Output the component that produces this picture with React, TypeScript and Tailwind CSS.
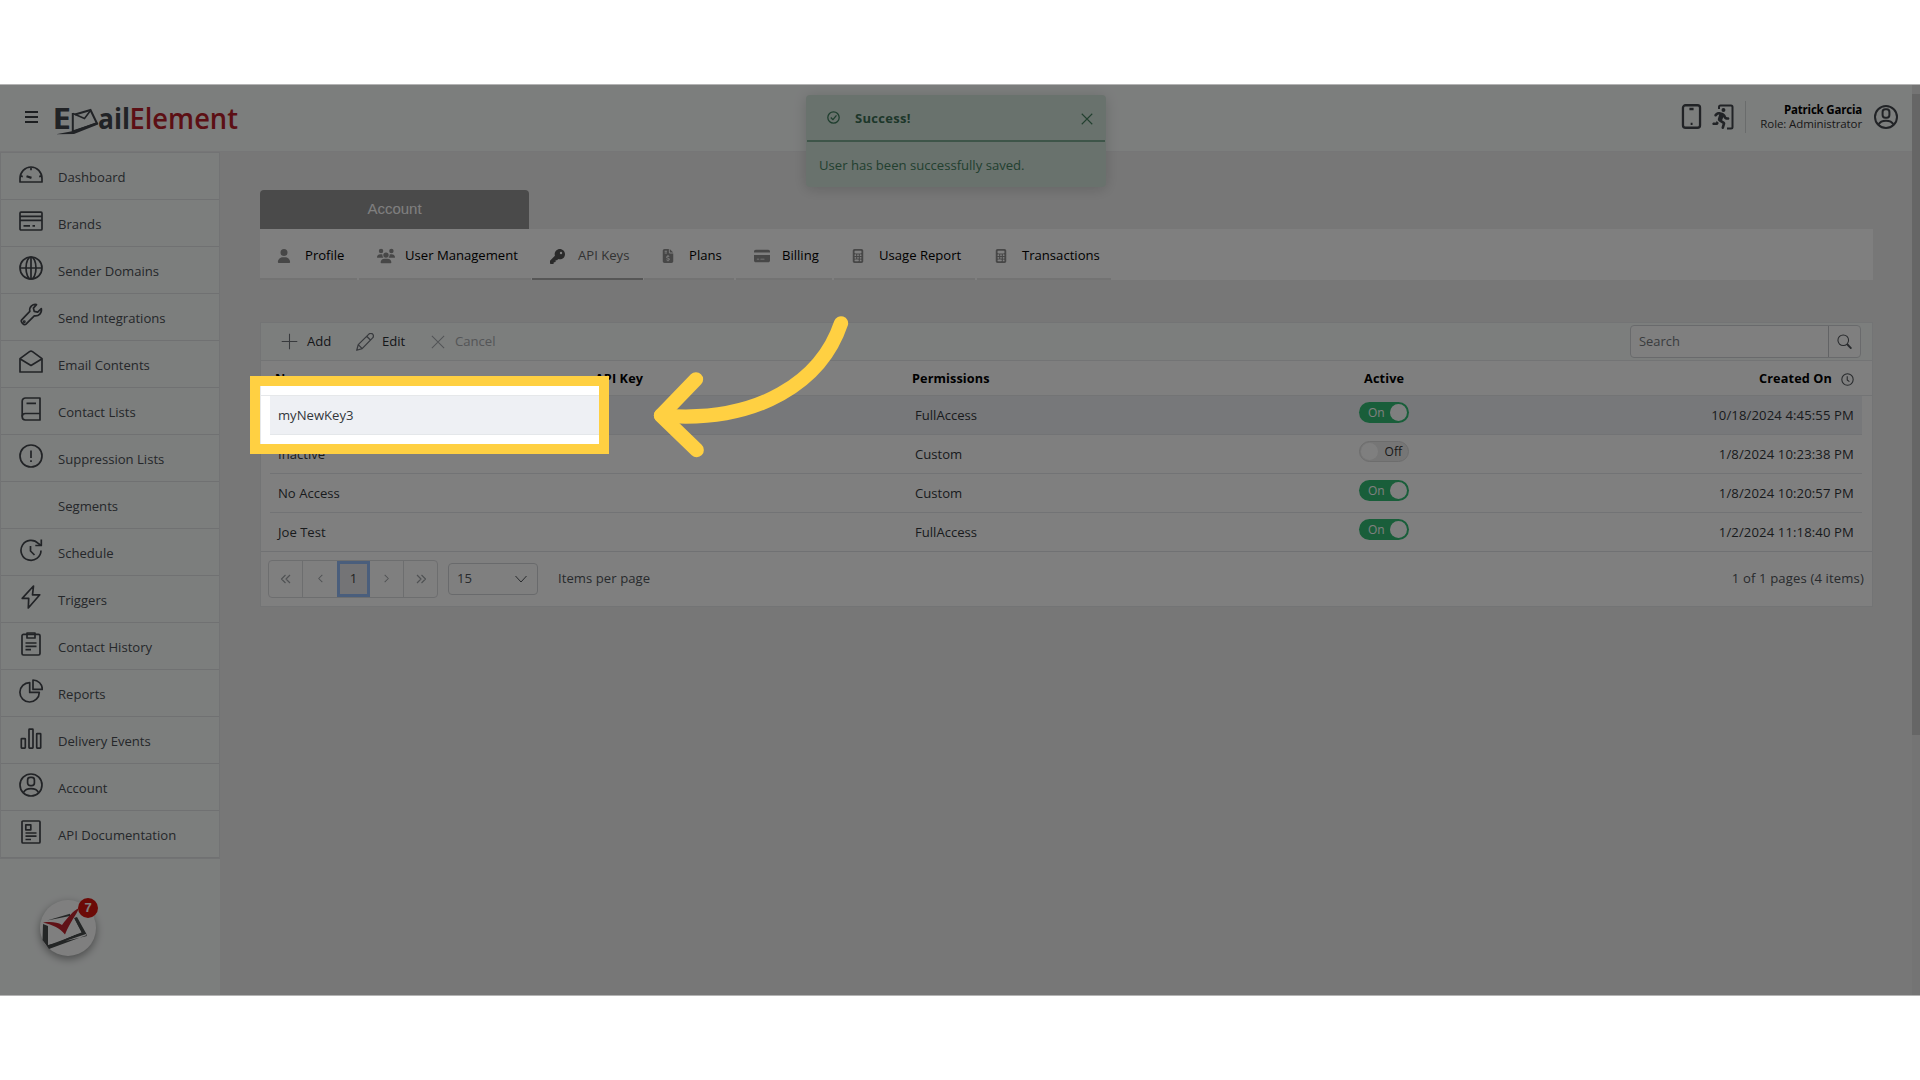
import React from 'react';
import { FaUser, FaUsers, FaKey, FaFileInvoiceDollar, FaCreditCard, FaCalculator, FaPersonRunning } from 'react-icons/fa6';

interface MenuItem {
  label: string;
  icon: React.ReactNode;
}

interface ApiKeyRow {
  name: string;
  permissions: string;
  active: boolean;
  created: string;
}

const userIcon = (
  <>
    <circle cx="12" cy="12" r="11" />
    <rect x="8.6" y="4.3" width="6.8" height="8.4" rx="2.6" />
    <path d="M4.4 19.6c1.4-2.6 4.3-3.9 7.6-3.9s6.2 1.3 7.6 3.9" />
  </>
);

const menuItems: MenuItem[] = [
  {
    label: 'Dashboard',
    icon: (
      <>
        <path d="M1 20v-3.500a11 11.500 0 0 1 22 0V20z" />
        <path d="M12 5.500v2.800M1.800 14l2 .6M22.200 14l-2 .6" />
        <path d="M7.500 14.200l5 1.700" strokeWidth="2.2" />
      </>
    ),
  },
  {
    label: 'Brands',
    icon: (
      <>
        <rect x="1" y="3.2" width="22" height="17.8" rx="1" />
        <path d="M1 7.300h22M1 11.400h22M4.500 16.900h6.500M13.500 16.900h2.500" />
      </>
    ),
  },
  {
    label: 'Sender Domains',
    icon: (
      <>
        <circle cx="12" cy="12" r="11" />
        <ellipse cx="12" cy="12" rx="5" ry="11" />
        <path d="M1 12h22M12 1v22" />
      </>
    ),
  },
  {
    label: 'Send Integrations',
    icon: (
      <>
        <path d="M17.500 1.600c-3.600-.8-7.500 2-6.700 6.800L2.700 16.900c-1.600 1.700 2.300 6 4.300 4.200l8.300-8.300c4.500.8 7.900-3 7-7.300l-3.600 3.600-3.500-.8-.8-3.200z" />
        <circle cx="5.3" cy="18.7" r=".6" />
      </>
    ),
  },
  {
    label: 'Email Contents',
    icon: (
      <>
        <path d="M1 22V8.600L10.500 1.600a2.800 2.800 0 0 1 3 0L23 8.600V22z" />
        <path d="M1.300 9L12 15.500 22.700 9" />
      </>
    ),
  },
  {
    label: 'Contact Lists',
    icon: (
      <>
        <path d="M21 1H6.500A3.300 3.300 0 0 0 3.200 4.300v15.500A3.200 3.200 0 0 0 6.400 23H21z" />
        <path d="M3.200 19.500c0-1.800 1.400-3 3.200-3H21M7.500 6.300h9.500" />
      </>
    ),
  },
  {
    label: 'Suppression Lists',
    icon: (
      <>
        <circle cx="12" cy="12" r="11" />
        <path d="M12 6.500v7.500M12 16.200v1.800" />
      </>
    ),
  },
  { label: 'Segments', icon: null },
  {
    label: 'Schedule',
    icon: (
      <>
        <path d="M22 12.500A10 10 0 1 1 19.300 5.500l2.500 1.800" />
        <path d="M22.300 1.500v6h-6M11.500 8v5l4 4" />
      </>
    ),
  },
  { label: 'Triggers', icon: <path d="M14.500 1L3.200 13.300h6.500L9.300 23 20.800 9.800h-7.300z" /> },
  {
    label: 'Contact History',
    icon: (
      <>
        <rect x="3" y="2.3" width="18" height="20.7" rx="1.5" />
        <path d="M8 1h8v5H8zM6.500 11h11M6.500 14.300h11M6.500 17.700h5.500" />
      </>
    ),
  },
  {
    label: 'Reports',
    icon: (
      <>
        <path d="M10.700 3.600A9.700 9.700 0 1 0 20.300 13.400h-9.600z" />
        <path d="M14 1v9.400h9.300A9.300 9.300 0 0 0 14 1z" />
      </>
    ),
  },
  {
    label: 'Delivery Events',
    icon: (
      <>
        <rect x="2.3" y="12.6" width="4" height="9.5" rx=".5" />
        <rect x="10" y="3.2" width="4" height="18.9" rx=".5" />
        <rect x="17.7" y="7.6" width="4" height="14.5" rx=".5" />
      </>
    ),
  },
  { label: 'Account', icon: userIcon },
  {
    label: 'API Documentation',
    icon: (
      <>
        <rect x="3" y="1" width="18" height="22" rx="1" />
        <path d="M6.800 4.800h5v5h-5zM6.500 13h11M6.500 16.200h11M6.500 19.500h5.500" />
      </>
    ),
  },
];

const tabs = [
  { label: 'Profile', icon: <FaUser size={14} />, box: 'w-[97px] mr-[2px] pl-[17px]' },
  { label: 'User Management', icon: <FaUsers size={18} />, box: 'w-[172px] mr-[1px] pl-[18px]' },
  { label: 'API Keys', icon: <FaKey size={15} />, box: 'w-[111px] mr-[1px] pl-[18px]', active: true },
  { label: 'Plans', icon: <FaFileInvoiceDollar size={14} />, box: 'w-[90px] mr-[2px] pl-[17px]' },
  { label: 'Billing', icon: <FaCreditCard size={16} />, box: 'w-[96px] mr-[2px] pl-[18px]' },
  { label: 'Usage Report', icon: <FaCalculator size={14} />, box: 'w-[141px] mr-[2px] pl-[17px]' },
  { label: 'Transactions', icon: <FaCalculator size={14} />, box: 'w-[134px] pl-[17px]' },
];

const rows: ApiKeyRow[] = [
  { name: 'myNewKey3', permissions: 'FullAccess', active: true, created: '10/18/2024 4:45:55 PM' },
  { name: 'Inactive', permissions: 'Custom', active: false, created: '1/8/2024 10:23:38 PM' },
  { name: 'No Access', permissions: 'Custom', active: true, created: '1/8/2024 10:20:57 PM' },
  { name: 'Joe Test', permissions: 'FullAccess', active: true, created: '1/2/2024 11:18:40 PM' },
];

// Shared wrapper for the line icons
const LineIcon = ({ children, className = 'size-6', width = 1.6 }: { children: React.ReactNode; className?: string; width?: number }) => (
  <svg viewBox="0 0 24 24" className={`shrink-0 ${className}`} fill="none" stroke="currentColor" strokeWidth={width} strokeLinejoin="round">
    {children}
  </svg>
);

const Logo = () => (
  <svg width="194" height="48" viewBox="-4 0 194 48" className="shrink-0 overflow-visible">
    <g fontFamily="'Open Sans', sans-serif" fontSize="29">
      <text x="-2.5" y="33" fontWeight="700" fill="#43474c" textLength="18.5" lengthAdjust="spacingAndGlyphs">E</text>
      <text x="43" y="33" fontWeight="700" fill="#43474c" textLength="32" lengthAdjust="spacingAndGlyphs">ail</text>
      <text x="74.5" y="33" fontWeight="600" fill="#b81f2a" textLength="108.5" lengthAdjust="spacingAndGlyphs">Element</text>
    </g>
    <path d="M17.800 17V35.500L42 27.500L35.500 14L20 18.500" fill="none" stroke="#43474c" strokeWidth="2" />
    <path d="M18 17.500L29.500 22.500L35.500 14.500" fill="none" stroke="#43474c" strokeWidth="1.6" />
    <path d="M1 38.300L17 35.200L42 26L43 28.500L19 38z" fill="#43474c" />
  </svg>
);

const Header = () => (
  <header className="flex h-[67px] items-center border-b border-[#ececee] bg-[#f9fcfb] pl-[25px] pr-[14px] text-[#43474c]">
    <div className="mb-[2px] flex w-[13px] flex-col gap-[3px]">
      <span className="h-[2px] bg-[#3b3f43]" />
      <span className="h-[2px] bg-[#3b3f43]" />
      <span className="h-[2px] bg-[#3b3f43]" />
    </div>
    <div className="ml-[13px] mt-[3px]"><Logo /></div>
    <div className="ml-auto mb-[3px] flex items-center">
      <LineIcon className="size-[25px]" width={2.2}>
        <rect x="3.8" y="1.2" width="16.4" height="21.6" rx="2.5" />
        <path d="M10 4.800h4M11.200 19h1.800" />
      </LineIcon>
      {/* Log out: runner in front of a door frame */}
      <svg width="22" height="26" viewBox="0 0 22 26" className="ml-[8px] shrink-0">
        <path d="M7 5V3a1.500 1.500 0 0 1 1.500-1.500h10.500A1.500 1.500 0 0 1 20.500 3v20a1.500 1.500 0 0 1-1.500 1.500h-4" fill="none" stroke="currentColor" strokeWidth="2" />
        <FaPersonRunning x={-1} y={4} size={21} />
      </svg>
      <div className="ml-[11px] h-[32px] w-px bg-[#d5d8d8]" />
      <div className="ml-[14px] w-[102px] text-right text-[11.500px] leading-[14px] whitespace-nowrap text-black">
        <div className="mt-px font-bold tracking-[-0.200px]">Patrick Garcia</div>
        <div className="tracking-[-0.100px] text-[#333]">Role: Administrator</div>
      </div>
      <LineIcon className="ml-[12px] size-6" width={2}>{userIcon}</LineIcon>
    </div>
  </header>
);

const Sidebar = () => (
  <aside className="flex w-[220px] shrink-0 flex-col bg-[#f9fcfb]">
    <nav className="w-[220px] border border-[#e4e7e9]">
      {menuItems.map((item) => (
        <div key={item.label} className="flex h-[47px] items-center border-b border-[#e0e3e5] pl-[18px] text-[13.100px] text-[#4a4f54]">
          <span className="mb-[4px] size-6 text-[#43474c]">{item.icon && <LineIcon width={1.7}>{item.icon}</LineIcon>}</span>
          <span className="ml-[15px] mt-[4px]">{item.label}</span>
        </div>
      ))}
    </nav>
    <div className="relative ml-[40px] mt-[41px] size-[56px] rounded-full bg-white shadow-[0_3px_8px_rgba(0,0,0,0.400)]">
      <svg width="56" height="56" viewBox="0 0 56 56">
        <path d="M3 24L8 26V45L47 36L46 34L9 46.500L41 32L34 18L37 17L47 35L9 49L2.500 40z" fill="#484c4c" />
        <path d="M9 45L41.500 33V34.500L10 46z" fill="#484c4c" />
        <path d="M8 26V44L41.500 32.500L34 19L30 16z" fill="#fff" />
        <path d="M7 20.500L30 13.800V16z" fill="#484c4c" />
        <path d="M3 22.500C11 21.500 17 22 22 25C28 17 33 11 39 8C37 14 30 22 25 34.500C20 28 13 25 3 22.500z" fill="#c0242e" />
      </svg>
      <span className="absolute -top-[2px] left-[38px] flex size-[20px] items-center justify-center rounded-full bg-[#d8150e] font-['Liberation_Sans',sans-serif] text-[13px] font-bold text-white">7</span>
    </div>
  </aside>
);

const Switch = ({ on }: { on: boolean }) =>
  on ? (
    <div className="flex h-[21px] w-[50px] items-center justify-between rounded-full bg-[#32bd74] pl-[9px] pr-[2px] text-[12px] text-white">
      <span className="mt-px">On</span><span className="size-[17px] rounded-full bg-white" />
    </div>
  ) : (
    <div className="flex h-[21px] w-[50px] items-center justify-between rounded-full border border-[#dadada] bg-[#ececec] pl-[1px] pr-[6px] text-[12px] text-[#333]">
      <span className="size-[17px] rounded-full bg-white" /><span className="mt-px">Off</span>
    </div>
  );

const Toolbar = () => (
  <div className="flex h-[38px] items-center border-b border-[#e6e8ea] bg-[#f9fcfb] pl-[20px] pr-[11px] text-[13.100px] text-[#2b2f33]">
    <LineIcon className="size-[17px] text-[#70757b]" width={1.5}><path d="M12 1v22M1 12h22" /></LineIcon>
    <span className="ml-[9px] mt-px w-[25px]">Add</span>
    <LineIcon className="ml-[24px] size-[18px] text-[#70757b]" width={1.7}>
      <path d="M1 23L3 15.500 17.200 1.500a2.800 2.800 0 0 1 5 5L8.200 20.800zM3 15.500l5.200 5.300M14.200 4.300l5.400 5.400" />
    </LineIcon>
    <span className="ml-[8px] mt-px w-[24px]">Edit</span>
    <LineIcon className="ml-[25px] size-[14px] text-[#a5a9ad]" width={1.8}><path d="M1.500 1.500l21 21M22.500 1.500l-21 21" /></LineIcon>
    <span className="ml-[10px] mt-px text-[#a8abae]">Cancel</span>
    <div className="ml-auto flex h-[33px] w-[231px] items-center rounded-[4px] border border-[#d2d5d8] bg-white">
      <span className="mt-px flex-1 pl-[8px] text-[12.900px] text-[#75797d]">Search</span>
      <span className="flex h-full w-[32px] items-center justify-center border-l border-[#c4c7ca]">
        <LineIcon className="size-[15px] text-[#50555a]" width={1.7}>
          <circle cx="10" cy="10" r="8.5" />
          <path d="M16 16l7 7.500" strokeWidth="3" />
        </LineIcon>
      </span>
    </div>
  </div>
);

const Pager = () => (
  <div className="flex h-[53px] items-center pl-[7px] pr-[8px] text-[13.100px] text-[#50555a]">
    <div className="flex h-[38px] w-[170px] rounded-[4px] border border-[#dadcdf] text-[#a0a4a8]">
      <span className="flex w-[34px] items-center justify-center border-r border-[#dadcdf]">
        <LineIcon className="size-[12px]" width={2.4}><path d="M11 4l-8 8 8 8M20 4l-8 8 8 8" /></LineIcon>
      </span>
      <span className="flex w-[34px] items-center justify-center">
        <LineIcon className="size-[11px]" width={2.2}><path d="M16 4l-8 8 8 8" /></LineIcon>
      </span>
      <span className="flex w-[33px] items-center justify-center border-[3px] border-[#94bcf8] bg-[#e9e9ec] text-[#444]">1</span>
      <span className="flex w-[34px] items-center justify-center border-r border-[#dadcdf]">
        <LineIcon className="size-[11px]" width={2.2}><path d="M8 4l8 8-8 8" /></LineIcon>
      </span>
      <span className="flex flex-1 items-center justify-center">
        <LineIcon className="size-[12px]" width={2.4}><path d="M4 4l8 8-8 8M13 4l8 8-8 8" /></LineIcon>
      </span>
    </div>
    <div className="ml-[10px] flex h-[32px] w-[90px] items-center justify-between rounded-[4px] border border-[#d2d5d8] pl-[8px] pr-[10px]">
      15
      <LineIcon className="size-[12px]" width={2}><path d="M1 6l11 12L23 6" /></LineIcon>
    </div>
    <span className="ml-[20px] tracking-[0.060px]">Items per page</span>
    <span className="ml-auto tracking-[0.140px]">1 of 1 pages (4 items)</span>
  </div>
);

const Grid = () => (
  <section className="mt-[42px] h-[285px] border border-[#e6e8ea] bg-white">
    <Toolbar />
    <div className="flex h-[35px] items-center border-b border-[#e6e8ea] pl-[14px] pr-[18px] pt-[2px] text-[12.700px] font-bold text-black">
      <span className="w-[320px]">Name</span>
      <span className="w-[317px] tracking-[0.100px]">API Key</span>
      <span className="w-[452px] tracking-[0.100px]">Permissions</span>
      <span className="tracking-[0.150px]">Active</span>
      <span className="ml-auto mr-[9px] tracking-[0.120px]">Created On</span>
      <LineIcon className="size-[13px] text-[#50555a]" width={2}>
        <circle cx="12" cy="12" r="10.5" />
        <path d="M11.500 6v7l4 3" />
      </LineIcon>
    </div>
    {rows.map((row, i) => (
      <div key={row.name} className={i === rows.length - 1 ? 'border-b border-[#e0e3e6] pl-[9px] pr-[10px]' : 'pl-[9px] pr-[10px]'}>
        <div className={`flex items-center pl-[8px] pr-[8px] pt-[2px] text-[13.100px] text-[#33373b] ${i === 0 ? 'bg-[#eef0f4]' : ''} ${i === rows.length - 1 ? 'h-[38px]' : 'h-[39px] border-b border-[#e4e7ea]'}`}>
          <span className="w-[637px]">{row.name}</span>
          <span className="w-[444px]">{row.permissions}</span>
          <span className="mb-[7px]"><Switch on={row.active} /></span>
          <span className="ml-auto tracking-[0.120px]">{row.created}</span>
        </div>
      </div>
    ))}
    <Pager />
  </section>
);

const Toast = () => (
  <div className="absolute left-[806px] top-[10px] h-[92px] w-[300px] rounded-[4px] bg-[#d3e4da] text-[#44805f] shadow-[0_2px_14px_rgba(0,0,0,0.160)]">
    <div className="mx-[1px] flex h-[47px] items-center border-b-2 border-[#7dab92] pl-[20px] pr-[12px]">
      <LineIcon className="mb-[1px] size-[13px] text-[#3f7d5e]" width={2.4}>
        <circle cx="12" cy="12" r="10.5" />
        <path d="M7 12l4 4 6.500-8" />
      </LineIcon>
      <span className="ml-[15px] mt-[3px] text-[13px] font-bold tracking-[0.300px] text-[#3a6e54]">Success!</span>
      <LineIcon className="ml-auto mt-[2px] size-[12px]" width={2.2}><path d="M1.500 1.500l21 21M22.500 1.500l-21 21" /></LineIcon>
    </div>
    <p className="pl-[13px] pt-[13px] text-[13.100px] leading-[20px] whitespace-nowrap">User has been successfully saved.</p>
  </div>
);

export default function App() {
  return (
    <div className="h-[1080px] w-[1920px] overflow-hidden bg-white pt-[84px] font-['Open_Sans','Noto_Sans',sans-serif]">
      <div className="relative flex h-[912px] overflow-hidden border-y border-[#b4b4b4]">
        <div className="flex w-[1912px] flex-col">
          <Header />
          <div className="flex flex-1 bg-[#efefef]">
            <Sidebar />
            <main className="w-[1613px] shrink-0 ml-[40px] pt-[38px]">
              <div className="flex h-[39px] w-[269px] items-center justify-center rounded-t-[4px] bg-[#949494] font-['Liberation_Sans',sans-serif] text-[15px] text-white">Account</div>
              <div className="flex h-[51px] bg-white">
                {tabs.map((tab) => (
                  <div
                    key={tab.label}
                    className={`flex items-center border-b-2 pt-[5px] text-[13.100px] whitespace-nowrap ${tab.box} ${tab.active ? 'border-[#acacac] text-[#666]' : 'border-[#e6e6e6] text-black'}`}
                  >
                    <span className={`w-[28px] shrink-0 ${tab.active ? 'text-[#555]' : 'text-[#8f8f8f]'}`}>{tab.icon}</span>
                    <span>{tab.label}</span>
                  </div>
                ))}
              </div>
              <Grid />
            </main>
          </div>
        </div>
        {/* Page scrollbar */}
        <div className="w-[8px] bg-[#e8e8e8] pt-[9px]">
          <div className="h-[641px] bg-[#cdcdcd]" />
        </div>
        <Toast />
        {/* Spotlight: the huge shadow dims everything outside the box */}
        <div className="absolute left-[250px] top-[291px] h-[78px] w-[359px] border-[10px] border-[#ffd042] shadow-[0_0_0_2000px_rgba(0,0,0,0.500)]" />
        <svg className="absolute left-[640px] top-[220px]" width="230" height="160" viewBox="640 305 230 160" fill="none" stroke="#ffd042" strokeWidth="14.3" strokeLinecap="round" strokeLinejoin="round">
          <path d="M841 323.300C822 380 760 424 661 415.500" />
          <path d="M696 379.300L661 415.500L696.700 450" />
        </svg>
      </div>
    </div>
  );
}
